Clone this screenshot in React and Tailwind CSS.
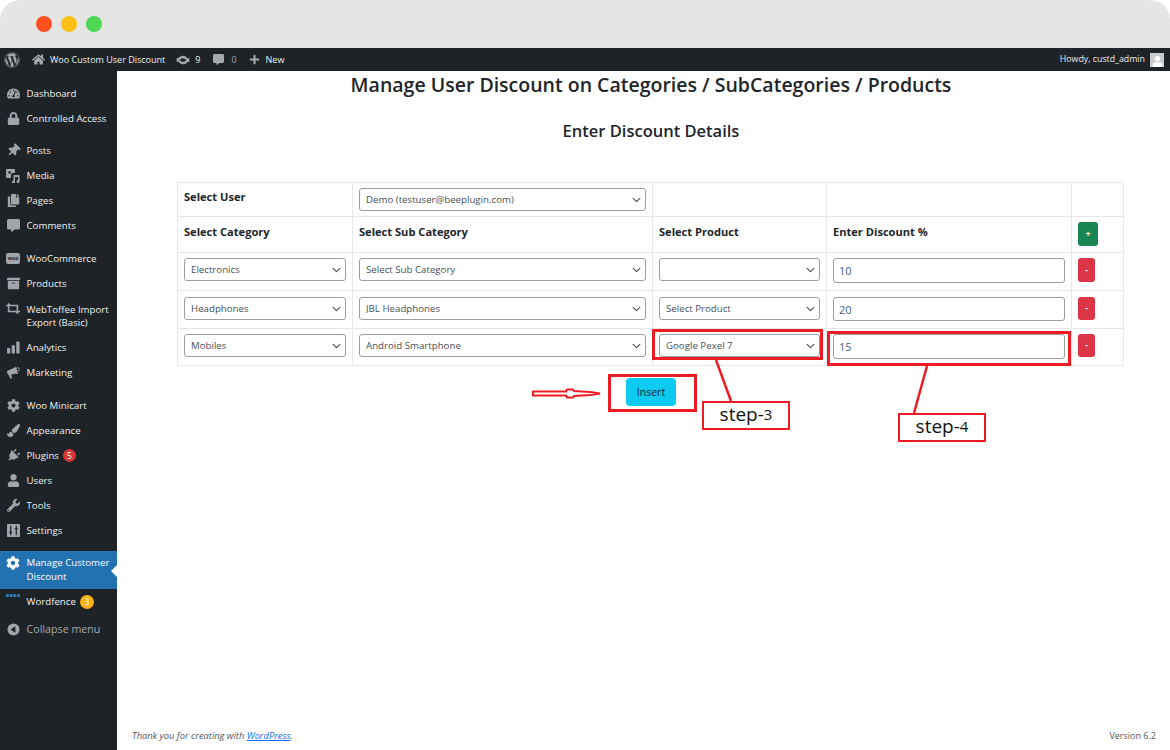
import React from "react";
import { FaWordpress, FaHome, FaCommentAlt, FaPlus, FaTachometerAlt, FaLock, FaThumbtack, FaCopy, FaArchive, FaCog, FaPaintBrush, FaPlug, FaUser, FaWrench } from "react-icons/fa";

const font = "font-['Open_Sans','Noto_Sans',sans-serif]";

function Update({ className }) {
  return (
    <svg viewBox="0 0 20 14" className={className} fill="currentColor">
      <path d="M10 1c3 0 5.400 1.700 6.600 4.200L19 3.500V10h-6.200l2-1.800C14 5.900 12.200 4.500 10 4.500c-1.400 0-2.700.7-3.500 1.600L3.600 4.300C5 2.300 7.300 1 10 1zM1 4h6.200l-2 1.800C6 8.100 7.800 9.500 10 9.500c1.400 0 2.700-.7 3.500-1.600l2.900 1.800C15 11.700 12.700 13 10 13c-3 0-5.400-1.700-6.600-4.200L1 10.500z" />
    </svg>
  );
}

function Woo() {
  return (
    <span className="flex h-[11px] w-[15px] items-center justify-center rounded-[2px] bg-[#a0a5aa] text-[5px] font-bold leading-none text-[#1d2327]">woo</span>
  );
}

function Loop() {
  return (
    <svg viewBox="0 0 16 12" className="h-[11px] w-[14px]" fill="none" stroke="#a0a5aa" strokeWidth="1.800">
      <path d="M0 2.500h3V1l2 1.500h9M3 2.500v7M13 2.500v7M2 9.500h9l2 1.500V9.500h3" />
    </svg>
  );
}

function MediaIcon() {
  return (
    <svg viewBox="0 0 14 14" className="h-[14px] w-[14px]" fill="#a0a5aa">
      <path d="M1 0h7a1 1 0 0 1 1 1v3H7a2 2 0 0 0-2 2v3H1a1 1 0 0 1-1-1V1a1 1 0 0 1 1-1z" />
      <circle cx="3.500" cy="3.500" r="1.300" fill="#1d2327" />
      <path d="M7.500 6h6v6.500a1.500 1.500 0 1 1-1.500-1.500V8H9v5a1.500 1.500 0 1 1-1.500-1.500z" />
    </svg>
  );
}

function Bars() {
  return (
    <svg viewBox="0 0 14 13" className="h-[13px] w-[13px]" fill="#a0a5aa">
      <rect x="0" y="7" width="3.500" height="6" rx=".5" />
      <rect x="5" y="4" width="3.500" height="9" rx=".5" />
      <rect x="10" y="0" width="3.500" height="13" rx=".5" />
    </svg>
  );
}

function Megaphone() {
  return (
    <svg viewBox="0 0 14 14" className="h-[13px] w-[13px]" fill="#a0a5aa">
      <path d="M0 6C0 4 7 3.500 9 .5L12 8.500C9.500 8 6.500 8.500 4.500 9.500L5.500 13.500H3.500L2 10C.8 9.500 0 7.500 0 6Z" />
      <circle cx="11.500" cy="3.500" r="1.800" fill="none" stroke="#a0a5aa" strokeWidth="1" />
    </svg>
  );
}

function SettingsIcon() {
  return (
    <svg viewBox="0 0 14 14" className="h-[13px] w-[13px]">
      <rect width="14" height="14" rx="1" fill="#a0a5aa" />
      <path d="M4 2v10M10 2v10M2.500 9h3M8.500 5h3" stroke="#1d2327" strokeWidth="1.300" />
    </svg>
  );
}

function Collapse() {
  return (
    <svg viewBox="0 0 14 14" className="h-[13px] w-[13px]">
      <circle cx="7" cy="7" r="6.500" fill="#a0a5aa" />
      <path d="M9 3.500v7L4 7z" fill="#1d2327" />
    </svg>
  );
}

function WordfenceLogo() {
  return (
    <svg viewBox="0 0 15 4" className="h-[4px] w-[15px]" fill="#2f7fb8">
      <rect x="0" y="0" width="3" height="3" />
      <rect x="4" y="0" width="3" height="3" />
      <rect x="8" y="0" width="3" height="3" />
      <rect x="12" y="0" width="3" height="3" />
    </svg>
  );
}

const ic = "text-[13px] text-[#a0a5aa]";

const groups = [
  [
    { icon: <FaTachometerAlt className={ic} />, label: "Dashboard" },
    { icon: <FaLock className={ic} />, label: "Controlled Access" },
  ],
  [
    { icon: <FaThumbtack className={`${ic} rotate-45`} />, label: "Posts" },
    { icon: <MediaIcon />, label: "Media" },
    { icon: <FaCopy className={ic} />, label: "Pages" },
    { icon: <FaCommentAlt className={ic} />, label: "Comments" },
  ],
  [
    { icon: <Woo />, label: "WooCommerce" },
    { icon: <FaArchive className={ic} />, label: "Products" },
    { icon: <Loop />, label: "WebToffee Import Export (Basic)", two: true },
    { icon: <Bars />, label: "Analytics" },
    { icon: <Megaphone />, label: "Marketing" },
  ],
  [
    { icon: <FaCog className={ic} />, label: "Woo Minicart" },
    { icon: <FaPaintBrush className={ic} />, label: "Appearance" },
    { icon: <FaPlug className={`${ic} rotate-45`} />, label: "Plugins", badge: "5", badgeColor: "bg-[#d63638] text-white" },
    { icon: <FaUser className={ic} />, label: "Users" },
    { icon: <FaWrench className={ic} />, label: "Tools" },
    { icon: <SettingsIcon />, label: "Settings" },
  ],
];

function MenuItem({ item }) {
  return (
    <div className={`flex w-full pl-[6px] pr-[4px] ${item.two ? "h-[39px] items-center" : "h-[25px] items-center"}`}>
      <span className={`flex w-[14px] shrink-0 justify-center ${item.two ? "self-start pt-[7px]" : ""}`}>{item.icon}</span>
      <span className="ml-[6.500px] flex items-center text-[9.7px] leading-[13px] text-[#f0f0f1]">
        {item.label}
        {item.badge && (
          <span className={`ml-[4px] flex h-[13px] w-[13px] items-center justify-center rounded-full text-[8.500px] ${item.badgeColor}`}>{item.badge}</span>
        )}
      </span>
    </div>
  );
}

function Sidebar() {
  return (
    <aside className="flex w-[117px] shrink-0 flex-col bg-[#1d2327] pt-[10px]">
      {groups.map((g, i) => (
        <div key={i} className={i === 0 ? "mb-[7px]" : "mb-[8px]"}>
          {g.map((it) => <MenuItem key={it.label} item={it} />)}
        </div>
      ))}
      <div className="relative flex h-[38px] items-center bg-[#2271b1] pl-[6px] pr-[4px]">
        <span className="flex w-[14px] shrink-0 self-start justify-center pt-[5px]"><FaCog className="text-[14px] text-white" /></span>
        <span className="ml-[6.500px] text-[9.7px] leading-[14px] text-white">Manage Customer Discount</span>
        <span className="absolute right-0 top-[14px] h-0 w-0 border-y-[6px] border-r-[6px] border-y-transparent border-r-white" />
      </div>
      <div className="relative flex h-[25px] items-center pl-[6px] pr-[4px]">
        <span className="flex w-[14px] shrink-0 -translate-y-[6px] justify-center"><WordfenceLogo /></span>
        <span className="ml-[6.500px] flex items-center text-[9.7px] leading-[13px] text-[#f0f0f1]">
          Wordfence
          <span className="ml-[4px] flex h-[14px] w-[14px] items-center justify-center rounded-full bg-[#fcb214] text-[9px] text-white">3</span>
        </span>
      </div>
      <div className="mt-[2px] flex h-[26px] items-center pl-[6px] pr-[4px]">
        <span className="flex w-[14px] shrink-0 justify-center"><Collapse /></span>
        <span className="ml-[6.500px] text-[10.7px] leading-[13px] text-[#a7aaad]">Collapse menu</span>
      </div>
    </aside>
  );
}

function AdminBar() {
  return (
    <header className="flex h-[23px] shrink-0 items-center justify-between bg-[#1d2327] pl-[4px] pr-[6px] text-[9px] text-[#f0f0f1]">
      <div className="flex items-center">
        <FaWordpress className="text-[16px] text-[#a7aaad]" />
        <FaHome className="ml-[12px] text-[13px] text-[#a7aaad]" />
        <span className="ml-[5px]">Woo Custom User Discount</span>
        <Update className="ml-[11px] h-[12px] w-[14px] text-[#a7aaad]" />
        <span className="ml-[5px]">9</span>
        <FaCommentAlt className="ml-[13px] text-[11px] text-[#a7aaad]" />
        <span className="ml-[7px] text-[#a7aaad]">0</span>
        <FaPlus className="ml-[12px] text-[11px] text-[#a7aaad]" />
        <span className="ml-[6px]">New</span>
      </div>
      <div className="flex items-center">
        <span className="text-[8.8px]">Howdy, custd_admin</span>
        <span className="ml-[5px] flex h-[14px] w-[14px] items-end justify-center bg-[#c9cccd]">
          <FaUser className="text-[11px] text-white" />
        </span>
      </div>
    </header>
  );
}

function Chevron() {
  return (
    <svg viewBox="0 0 16 16" className="pointer-events-none absolute right-[5px] top-1/2 h-[9px] w-[9px] -translate-y-1/2" fill="none" stroke="#4a4f54" strokeWidth="2" strokeLinecap="round" strokeLinejoin="round">
      <path d="M2 5l6 6 6-6" />
    </svg>
  );
}

function Select({ value, h = "h-[23px]" }) {
  return (
    <div className={`relative w-full ${h}`}>
      <select
        value={value}
        onChange={() => {}}
        className={`${font} block h-full w-full appearance-none rounded-[3px] border border-[#9b9ea1] bg-white pl-[6px] pt-[1px] text-[9.7px] text-[#495057] outline-none`}
      >
        <option value={value}>{value}</option>
      </select>
      <Chevron />
    </div>
  );
}

function NumInput({ value, h }) {
  return (
    <input
      readOnly
      value={value}
      className={`${font} block ${h} w-full rounded-[3px] border border-[#9b9ea1] bg-white pl-[5px] text-[11px] text-[#3d5f80] outline-none`}
    />
  );
}

function Minus({ h = "h-[24px]" }) {
  return (
    <button className={`flex ${h} w-[17px] items-center justify-center rounded-[3px] bg-[#dc3545] text-[10px] font-semibold text-white`}>-</button>
  );
}

const td = "border border-[#e6e8eb] px-[6px] align-top";
const th = "text-[11.1px] font-bold text-[#212529] leading-[16px]";

function DiscountTable() {
  const rows = [
    { r: "h-[38px]", cat: "Electronics", sub: "Select Sub Category", prod: "", val: "10", ih: "h-[25px]", mh: "h-[24px]", pt: "pt-[5px]" },
    { r: "h-[38px]", cat: "Headphones", sub: "JBL Headphones", prod: "Select Product", val: "20", ih: "h-[24px]", mh: "h-[23px]", pt: "pt-[6px]" },
    { r: "h-[37px]", cat: "Mobiles", sub: "Android Smartphone", prod: "Google Pexel 7", val: "15", ih: "h-[25px]", mh: "h-[23px]", pt: "pt-[5px]" },
  ];
  return (
    <table className="ml-[60px] mt-[39px] w-[946px] table-fixed border-collapse">
      <colgroup>
        <col className="w-[175px]" />
        <col className="w-[300px]" />
        <col className="w-[174px]" />
        <col className="w-[245px]" />
        <col className="w-[52px]" />
      </colgroup>
      <tbody>
        <tr className="h-[34px]">
          <td className={`${td} pt-[6px]`}><div className={th}>Select User</div></td>
          <td className={`${td} pt-[5px]`}><Select value="Demo (testuser@beeplugin.com)" /></td>
          <td className={td}></td>
          <td className={td}></td>
          <td className={td}></td>
        </tr>
        <tr className="h-[36px]">
          <td className={`${td} pt-[7px]`}><div className={th}>Select Category</div></td>
          <td className={`${td} pt-[7px]`}><div className={th}>Select Sub Category</div></td>
          <td className={`${td} pt-[7px]`}><div className={th}>Select Product</div></td>
          <td className={`${td} pt-[7px]`}><div className={th}>Enter Discount %</div></td>
          <td className={`${td} pt-[5px]`}>
            <button className="flex h-[24px] w-[20px] items-center justify-center rounded-[3px] bg-[#198754] text-[9px] font-bold text-white">+</button>
          </td>
        </tr>
        {rows.map((x) => (
          <tr key={x.val} className={x.r}>
            <td className={`${td} ${x.pt}`}><Select value={x.cat} /></td>
            <td className={`${td} ${x.pt}`}><Select value={x.sub} /></td>
            <td className={`${td} ${x.pt}`}><Select value={x.prod} /></td>
            <td className={`${td} ${x.pt}`}><NumInput value={x.val} h={x.ih} /></td>
            <td className={`${td} ${x.pt}`}><Minus h={x.mh} /></td>
          </tr>
        ))}
      </tbody>
    </table>
  );
}

function Annotations() {
  return (
    <div className="pointer-events-none absolute inset-0">
      <div className="absolute left-[652px] top-[329px] h-[31px] w-[171px] border-[3px] border-[#ed1c24]" />
      <div className="absolute left-[827px] top-[331px] h-[35px] w-[244px] border-[3px] border-[#ed1c24]" />
      <div className="absolute left-[608px] top-[374px] flex h-[38px] w-[89px] items-start border-[3px] border-[#ed1c24] pl-[15px] pt-[1px]">
        <button className="h-[28px] w-[50px] rounded-[4px] bg-[#0dcaf0] pt-[2px] text-[10.500px] text-[#10242c]">Insert</button>
      </div>
      <svg className="absolute inset-0 h-full w-full" viewBox="0 0 1170 750" fill="none">
        <path d="M716 360L731 401M927 366L914 413" stroke="#ed1c24" strokeWidth="2.500" />
        <path d="M533 391.500H566L567 389.500H573L574 391L590 392L600 393.500L590 395L574 396L573 397.500H567L566 395.500H533Z" stroke="#ed1c24" strokeWidth="2" fill="white" />
      </svg>
      <div className="absolute left-[702px] top-[401px] flex h-[29px] w-[88px] items-center justify-center border-[2.500px] border-[#ed1c24] bg-white pb-[3px] text-[19px] leading-none text-[#111]">step-<span className="text-[15px]">3</span></div>
      <div className="absolute left-[898px] top-[413px] flex h-[29px] w-[88px] items-center justify-center border-[2.500px] border-[#ed1c24] bg-white pb-[3px] text-[19px] leading-none text-[#111]">step-<span className="text-[15px]">4</span></div>
    </div>
  );
}

export default function App() {
  return (
    <div className={`${font} relative flex h-[750px] w-[1170px] flex-col overflow-hidden bg-white`}>
      <div className="flex h-[48px] shrink-0 items-center gap-[9px] rounded-t-[20px] bg-[#e5e5e5] pl-[36px]">
        <span className="h-[16px] w-[16px] rounded-full bg-[#ff5223]" />
        <span className="h-[16px] w-[16px] rounded-full bg-[#ffc018]" />
        <span className="h-[16px] w-[16px] rounded-full bg-[#4cd853]" />
      </div>
      <AdminBar />
      <div className="flex min-h-0 flex-1">
        <Sidebar />
        <main className="flex min-w-0 flex-1 flex-col">
          <h1 className="pl-[15px] text-center text-[19.500px] font-semibold leading-[28px] text-[#212529]">Manage User Discount on Categories / SubCategories / Products</h1>
          <h2 className="mt-[20px] pl-[15px] text-center text-[16.500px] font-semibold leading-[24px] text-[#212529]">Enter Discount Details</h2>
          <DiscountTable />
          <footer className="mt-auto flex items-center justify-between pb-[7px] pl-[15px] pr-[14px] text-[9px] leading-[14px] text-[#50575e]">
            <span className="text-[9.300px] italic">Thank you for creating with <span className="text-[#0d6efd] underline">WordPress</span>.</span>
            <span>Version 6.2</span>
          </footer>
        </main>
      </div>
      <Annotations />
    </div>
  );
}
